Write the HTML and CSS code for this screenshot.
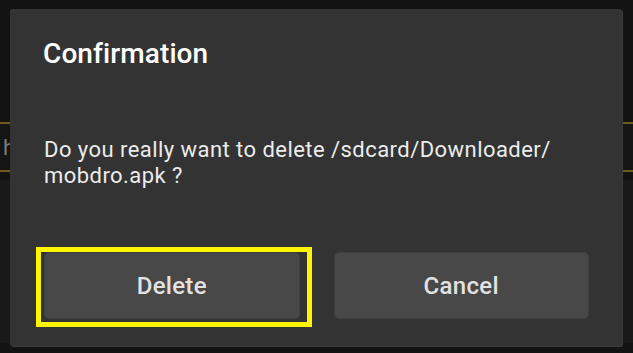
FILE: index.html
```html
<!DOCTYPE html>
<html>
<head>
<meta charset="utf-8">
<link rel="stylesheet" href="styles.css">
</head>
<body>
<div class="screen">
  <div class="field"><span class="field-text">h</span></div>
  <div class="panel"></div>
</div>
<div class="dialog">
  <h1 class="title">Confirmation</h1>
  <p class="message">Do you really want to delete /sdcard/Downloader/<br>mobdro.apk ?</p>
  <div class="actions">
    <button class="btn focused">Delete</button>
    <button class="btn">Cancel</button>
  </div>
</div>
</body>
</html>
```
FILE: styles.css
```css
html, body {
  margin: 0;
  padding: 0;
}
body {
  width: 633px;
  height: 353px;
  background: #131313;
  font-family: Roboto, "Noto Sans", sans-serif;
  overflow: hidden;
  position: relative;
}
.screen {
  padding-top: 122px;
}
.field {
  height: 46px;
  border-top: 2px solid #6e5c1c;
  border-bottom: 2px solid #6e5c1c;
  background: #151515;
  display: flex;
  align-items: center;
}
.field-text {
  margin-left: 3px;
  font-size: 22px;
  color: #7a7a7a;
}
.panel {
  margin-top: 8px;
  height: 163px;
  background: #191919;
}
.dialog {
  position: absolute;
  left: 10px;
  top: 9px;
  width: 612px;
  height: 337px;
  box-sizing: border-box;
  background: #333333;
  border-radius: 2px;
  padding: 27px 33px 0 34px;
  box-shadow: 1px 1px 0 #3a3a3a;
}
.title {
  margin: 0 0 0 -1px;
  font-size: 28px;
  line-height: 36px;
  font-weight: 500;
  color: #ffffff;
  letter-spacing: 0.1px;
}
.message {
  margin: 65px 0 0 0;
  font-size: 22px;
  line-height: 26px;
  letter-spacing: 0.45px;
  color: #ececec;
}
.actions {
  margin-top: 63px;
  display: flex;
  gap: 34px;
}
.btn {
  flex: 1;
  height: 67px;
  position: relative;
  background: #484848;
  border: 1px solid #404040;
  border-radius: 5px;
  color: #e2e2e2;
  font-family: Roboto, "Noto Sans", sans-serif;
  font-size: 24px;
  font-weight: 500;
  letter-spacing: 0.3px;
  padding: 0;
}
.btn.focused::after {
  content: "";
  position: absolute;
  left: -9px;
  right: -13px;
  top: -6px;
  bottom: -9px;
  border: 5px solid #fff500;
}
```
